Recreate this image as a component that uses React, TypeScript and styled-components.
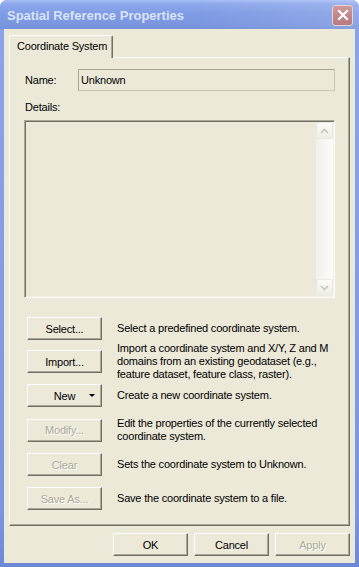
import React from 'react';
import styled, { createGlobalStyle } from 'styled-components';

const GlobalStyle = createGlobalStyle`
  html, body {
    margin: 0;
    padding: 0;
    background: #ffffff;
  }
  body {
    font-family: "Liberation Sans", Arial, sans-serif;
    font-size: 11px;
    letter-spacing: -0.2px;
    color: #000;
  }
  * {
    box-sizing: border-box;
  }
`;

interface Action {
  label: string;
  text: string[];
  top: number;
  disabled?: boolean;
  menu?: boolean;
}

const actions: Action[] = [
  { label: 'Select...', text: ['Select a predefined coordinate system.'], top: 0 },
  {
    label: 'Import...',
    text: [
      'Import a coordinate system and X/Y, Z and M',
      'domains from an existing geodataset (e.g.,',
      'feature dataset, feature class, raster).',
    ],
    top: 2,
  },
  { label: 'New', text: ['Create a new coordinate system.'], top: 3, menu: true },
  {
    label: 'Modify...',
    text: ['Edit the properties of the currently selected', 'coordinate system.'],
    top: 10,
    disabled: true,
  },
  { label: 'Clear', text: ['Sets the coordinate system to Unknown.'], top: 10, disabled: true },
  { label: 'Save As...', text: ['Save the coordinate system to a file.'], top: 11, disabled: true },
];

const Chevron = ({ up }: { up?: boolean }) => (
  <svg width="9" height="6" viewBox="0 0 9 6">
    <path
      d={up ? 'M1 5 L4.5 1.5 L8 5' : 'M1 1 L4.5 4.5 L8 1'}
      fill="none"
      stroke="#c8c6ba"
      strokeWidth="1.6"
    />
  </svg>
);

export default function App() {
  return (
    <>
      <GlobalStyle />
      <S.Window>
        <S.TitleBar>
          <S.Title>Spatial Reference Properties</S.Title>
          <S.Close>
            <svg width="12" height="12" viewBox="0 0 12 12">
              <path d="M2 2 L10 10 M10 2 L2 10" stroke="#ffffff" strokeWidth="2.2" strokeLinecap="square" />
            </svg>
          </S.Close>
        </S.TitleBar>

        <S.Client>
          <S.Tabs>
            <S.Tab>Coordinate System</S.Tab>
          </S.Tabs>

          <S.Panel>
            <S.NameRow>
              <S.Label>Name:</S.Label>
              <S.Field>Unknown</S.Field>
            </S.NameRow>

            <S.DetailsLabel>Details:</S.DetailsLabel>
            <S.DetailsBox>
              <S.DetailsText />
              <S.Scrollbar>
                <S.ScrollButton>
                  <Chevron up />
                </S.ScrollButton>
                <S.ScrollButton>
                  <Chevron />
                </S.ScrollButton>
              </S.Scrollbar>
            </S.DetailsBox>

            <S.Actions>
              {actions.map((a) => (
                <S.ActionRow key={a.label} $top={a.top}>
                  <S.Button $disabled={a.disabled}>
                    {a.label}
                    {a.menu && <S.MenuArrow />}
                  </S.Button>
                  <S.Description>
                    {a.text.map((line) => (
                      <div key={line}>{line}</div>
                    ))}
                  </S.Description>
                </S.ActionRow>
              ))}
            </S.Actions>
          </S.Panel>

          <S.Footer>
            <S.Button>OK</S.Button>
            <S.Button>Cancel</S.Button>
            <S.Button $disabled>Apply</S.Button>
          </S.Footer>
        </S.Client>
      </S.Window>
    </>
  );
}

const S = {
  Window: styled.div`
    width: 359px;
    height: 567px;
    display: flex;
    flex-direction: column;
    background: linear-gradient(to bottom, #8aa5eb, #7b96e0 90%, #6c87d6);
    border-radius: 7px 7px 0 0;
    overflow: hidden;
  `,
  TitleBar: styled.div`
    height: 29px;
    flex: none;
    display: flex;
    align-items: center;
    justify-content: space-between;
    padding: 1px 6px 0 7px;
    background:
      linear-gradient(to right, rgba(255, 255, 255, 0) 55%, rgba(255, 255, 255, 0.14)),
      linear-gradient(to bottom, #a9c0f4 0%, #8ea9ec 12%, #809ce4 45%, #7a96df 85%, #7590dc 100%);
  `,
  Title: styled.div`
    font-family: "Liberation Sans", Arial, sans-serif;
    font-weight: bold;
    font-size: 13px;
    letter-spacing: 0;
    color: #d8e4f8;
  `,
  Close: styled.div`
    width: 21px;
    height: 21px;
    display: flex;
    align-items: center;
    justify-content: center;
    border: 1px solid #e8d2d6;
    border-radius: 3px;
    background: linear-gradient(to bottom, #d29a9c, #c3878a 50%, #b87c80);
  `,
  Client: styled.div`
    flex: 1;
    display: flex;
    flex-direction: column;
    margin: 0 4px 4px 4px;
    padding: 6px 5px 7px 5px;
    background: #ece9d8;
  `,
  Tabs: styled.div`
    display: flex;
    height: 22px;
    position: relative;
    z-index: 1;
  `,
  Tab: styled.div`
    width: 104px;
    height: 23px;
    padding: 4px 0 0 7px;
    background: #ece9d8;
    border-top: 1px solid #ffffff;
    border-left: 1px solid #ffffff;
    border-right: 1px solid #716f64;
    box-shadow: inset -1px 0 #aca899;
    border-radius: 2px 2px 0 0;
    white-space: nowrap;
  `,
  Panel: styled.div`
    flex: 1;
    display: flex;
    flex-direction: column;
    padding: 11px 14px 0 14px;
    border-top: 1px solid #ffffff;
    border-left: 1px solid #ffffff;
    border-right: 1px solid #716f64;
    border-bottom: 1px solid #716f64;
    box-shadow: inset -1px -1px #aca899;
  `,
  NameRow: styled.div`
    display: flex;
    align-items: center;
    height: 22px;
  `,
  Label: styled.div`
    width: 54px;
    padding-left: 1px;
  `,
  Field: styled.div`
    flex: 1;
    height: 22px;
    line-height: 20px;
    padding-left: 2px;
    border: 1px solid #c9c6b6;
    border-top-color: #a9a697;
    border-left-color: #a9a697;
  `,
  DetailsLabel: styled.div`
    margin-top: 10px;
    padding-left: 1px;
    line-height: 13px;
  `,
  DetailsBox: styled.div`
    margin-top: 6px;
    height: 178px;
    display: flex;
    border: 1px solid #ffffff;
    border-top-color: #aca899;
    border-left-color: #aca899;
    box-shadow: inset 1px 1px #716f64, inset -1px -1px #f1efe2;
    padding: 1px;
  `,
  DetailsText: styled.div`
    flex: 1;
  `,
  Scrollbar: styled.div`
    width: 17px;
    display: flex;
    flex-direction: column;
    justify-content: space-between;
    background: linear-gradient(to right, #f1f0ea, #fcfcfa);
  `,
  ScrollButton: styled.div`
    width: 17px;
    height: 17px;
    display: flex;
    align-items: center;
    justify-content: center;
    border: 1px solid #ebe9e0;
    border-radius: 2px;
    background: linear-gradient(to bottom, #fbfbf8, #eeede6);
  `,
  Actions: styled.div`
    margin-top: 19px;
    margin-left: 3px;
    display: flex;
    flex-direction: column;
  `,
  ActionRow: styled.div<{ $top: number }>`
    display: grid;
    grid-template-columns: 75px 1fr;
    column-gap: 15px;
    align-items: center;
    margin-top: ${(p) => p.$top}px;
  `,
  Button: styled.div<{ $disabled?: boolean }>`
    position: relative;
    width: 75px;
    height: 23px;
    display: flex;
    align-items: center;
    justify-content: center;
    background: #ece9d8;
    border-top: 1px solid #ffffff;
    border-left: 1px solid #ffffff;
    border-right: 1px solid #716f64;
    border-bottom: 1px solid #716f64;
    box-shadow: inset -1px -1px #aca899;
    color: ${(p) => (p.$disabled ? '#aca899' : '#000000')};
    text-shadow: ${(p) => (p.$disabled ? '1px 1px #ffffff' : 'none')};
  `,
  MenuArrow: styled.span`
    position: absolute;
    right: 6px;
    top: 9px;
    width: 0;
    height: 0;
    border-left: 3px solid transparent;
    border-right: 3px solid transparent;
    border-top: 3px solid #000000;
  `,
  Description: styled.div`
    line-height: 13px;
    white-space: nowrap;
  `,
  Footer: styled.div`
    margin-top: 7px;
    display: flex;
    justify-content: flex-end;
    gap: 6px;
  `,
};
